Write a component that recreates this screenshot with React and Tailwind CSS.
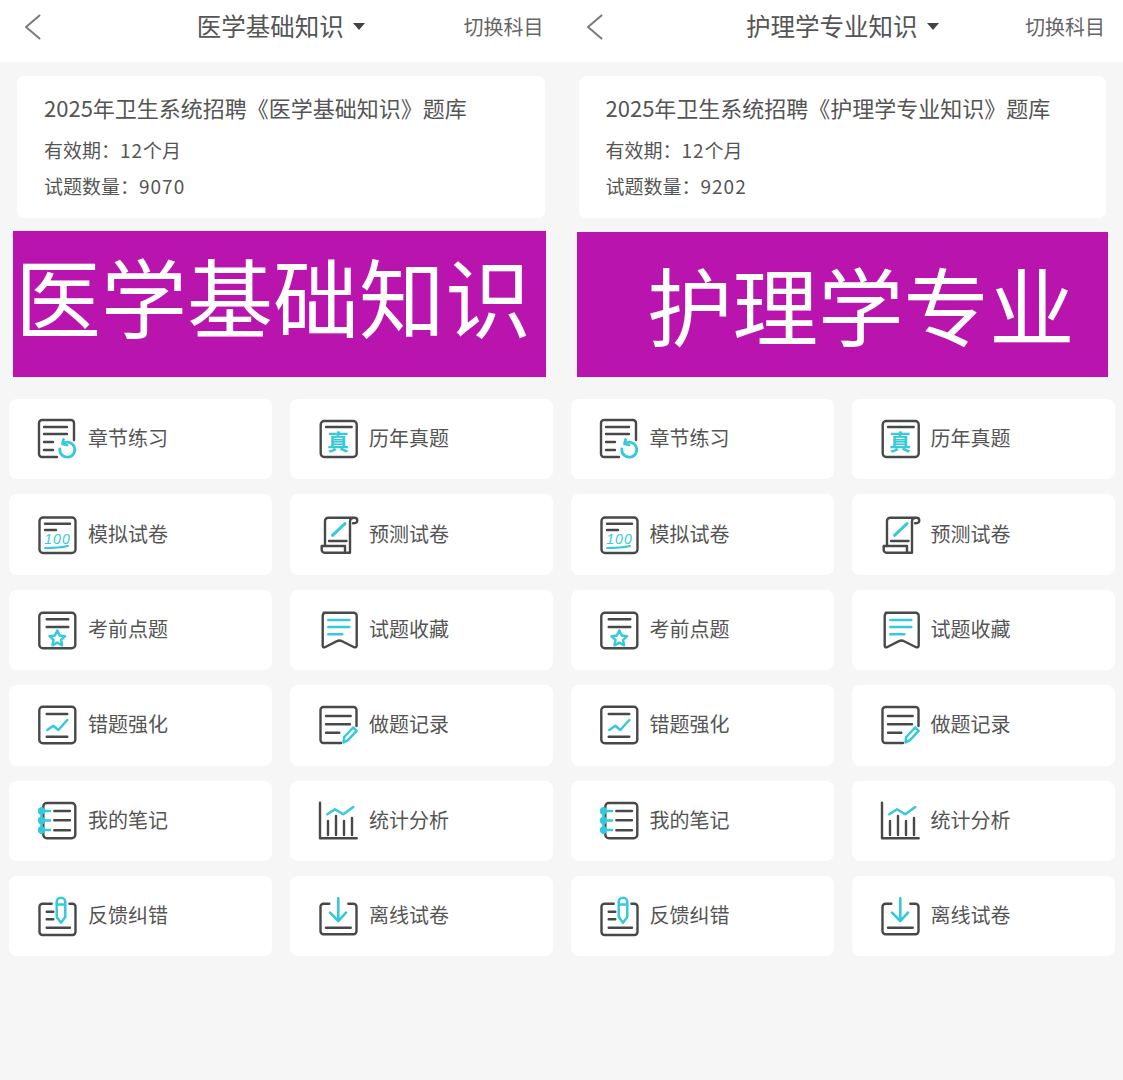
import React from 'react';

const Dark = ({ children }) => (
  <g fill="none" stroke="#484848" strokeWidth="2.4" strokeLinecap="round" strokeLinejoin="round">{children}</g>
);
const Cyan = ({ children, width = 2.5 }) => (
  <g fill="none" stroke="#35c9dc" strokeWidth={width} strokeLinecap="round" strokeLinejoin="round">{children}</g>
);

const ICONS = {
  chapter: (
    <>
      <Dark>
        <path d="M20 38H5a3 3 0 0 1-3-3V4a3 3 0 0 1 3-3h29a3 3 0 0 1 3 3v17" />
        <path d="M7 8h23M7 15h23M7 23h9M7 31h9" />
      </Dark>
      <Cyan width={2.8}>
        <path d="M26 24.5a7.5 7.5 0 1 1-3.2 5.5" />
        <path d="M26.5 20.5l-1 4.5 4.5 1" />
      </Cyan>
    </>
  ),
  exam: (
    <>
      <Dark>
        <rect x="2.5" y="2.5" width="36" height="35.5" rx="3.5" />
        <path d="M8 8.7h25M8 15h11" />
      </Dark>
      <text x="20.5" y="29" textAnchor="middle" fontSize="14" letterSpacing="1" fontStyle="italic" fontWeight="400" fill="#35c9dc" fontFamily="Liberation Sans, sans-serif">100</text>
      <Cyan width={1.8}>
        <path d="M8 33c8 0 16-.5 23-2" />
      </Cyan>
    </>
  ),
  past: (
    <>
      <Dark>
        <rect x="2.7" y="2" width="36" height="36" rx="3.5" />
        <path d="M8 8h25.7" />
      </Dark>
      <text x="20" y="31" textAnchor="middle" fontSize="22" fontWeight="700" fill="#35c9dc" fontFamily="Noto Sans CJK SC, sans-serif">真</text>
    </>
  ),
  predict: (
    <>
      <Dark>
        <path d="M7 31V6a3.3 3.3 0 0 1 3.3-3.3H36.5a2.8 2.8 0 0 1 2.8 2.8c0 1.5-1.2 2.7-4.3 2.7" />
        <path d="M35 3c-2 0-3 1.5-3 3.5V37.7H6.5A3 3 0 0 1 3.7 34.5V31H27v6" />
        <path d="M11 26h17.5" />
      </Dark>
      <Cyan width={3}>
        <path d="M14.5 20.3 27 8.7" />
      </Cyan>
    </>
  ),
  star: (
    <>
      <Dark>
        <rect x="2.3" y="2.7" width="36" height="35.6" rx="3.5" />
        <path d="M9.7 9.3h21.6M9.7 17h21.6" />
      </Dark>
      <Cyan>
        <path d="M20.3 20.5l2.4 5 5.4.7-4 3.7 1 5.4-4.8-2.7-4.8 2.7 1-5.4-4-3.7 5.4-.7z" />
      </Cyan>
    </>
  ),
  collect: (
    <>
      <Dark>
        <path d="M5.7 2.7h30a3 3 0 0 1 3 3v30c0 1.5-1.5 2-2.6 1.5l-12-6a6 6 0 0 0-5.2 0l-12 6c-1.1.5-2.2 0-2.2-1.5v-30a3 3 0 0 1 3-3z" />
      </Dark>
      <Cyan>
        <path d="M10.3 10h21M10.3 17h21M10.3 24.3h14" />
      </Cyan>
    </>
  ),
  wrong: (
    <>
      <Dark>
        <rect x="2.3" y="1.7" width="36" height="36.6" rx="3.5" />
        <path d="M9.7 9h20.6M9.7 31.7h20.6" />
      </Dark>
      <Cyan>
        <path d="M10.3 25l6-4.3 5 4.3 9-10" />
      </Cyan>
    </>
  ),
  record: (
    <>
      <Dark>
        <path d="M23 38H5.5a3 3 0 0 1-3-3V5a3 3 0 0 1 3-3h30a3 3 0 0 1 3 3v16" />
        <path d="M8 11h24.7M8 19.3h24M8 27.7h13.3" />
      </Dark>
      <Cyan>
        <path d="M25.5 37.5l.7-5.5 9-9.5 3.5 3.3-9 9.5z" />
      </Cyan>
    </>
  ),
  note: (
    <>
      <Dark>
        <rect x="6.3" y="2" width="32" height="35.3" rx="3.5" />
        <path d="M17.3 10H33M17.3 19.3H33M17.3 29.3H33" />
      </Dark>
      <Cyan width={2.6}>
        <circle cx="4.5" cy="10" r="2.4" fill="#35c9dc" />
        <circle cx="4.5" cy="19.5" r="2.4" fill="#35c9dc" />
        <circle cx="4.5" cy="29" r="2.4" fill="#35c9dc" />
        <path d="M4.5 10H13M4.5 19.5H13M4.5 29H13M4.5 7v25" />
      </Cyan>
    </>
  ),
  feedback: (
    <>
      <Dark>
        <path d="M14.7 7.7H5.5a3 3 0 0 0-3 3V36a3 3 0 0 0 3 3h30a3 3 0 0 0 3-3V10.7a3 3 0 0 0-3-3h-3" />
        <path d="M9.7 15.7h6.6M9.7 23.3h6.6M9.7 31.7H33" />
      </Dark>
      <Cyan>
        <path d="M19.7 6a4.3 4.3 0 0 1 8.6 0v15l-4.3 5.7-4.3-5.7zM19.7 8.5h8.6" />
      </Cyan>
    </>
  ),
  stats: (
    <>
      <Dark>
        <path d="M2 1.7v35.6h36.7" />
        <path d="M10 34V20M18 34V15M26 34V20M34 34V17" />
      </Dark>
      <Cyan>
        <path d="M9.3 13.3 17 8.3l8.3 5 10-7.3" />
      </Cyan>
    </>
  ),
  offline: (
    <>
      <Dark>
        <path d="M11.3 7.7H5.5a3 3 0 0 0-3 3V35.3a3 3 0 0 0 3 3h30a3 3 0 0 0 3-3V10.7a3 3 0 0 0-3-3h-5.2" />
        <path d="M8 31.7h24.7" />
      </Dark>
      <Cyan width={2.6}>
        <path d="M20.3 2.3V25M12 16.7l8.3 8.3 7.7-8.3" />
      </Cyan>
    </>
  ),
};

const MENU = [
  ['chapter', '章节练习'],
  ['past', '历年真题'],
  ['exam', '模拟试卷'],
  ['predict', '预测试卷'],
  ['star', '考前点题'],
  ['collect', '试题收藏'],
  ['wrong', '错题强化'],
  ['record', '做题记录'],
  ['note', '我的笔记'],
  ['stats', '统计分析'],
  ['feedback', '反馈纠错'],
  ['offline', '离线试卷'],
];

const Panel = ({ subject, title, count, banner, bannerClass }) => (
  <div className="w-[561.5px] shrink-0">
    <header className="h-[62px] bg-white grid grid-cols-[1fr_auto_1fr] items-center pb-[8px]">
      <div className="pl-[24px]">
        <svg width="17" height="26" viewBox="0 0 17 26" fill="none" stroke="#7a7a7a" strokeWidth="2" strokeLinecap="round" strokeLinejoin="round">
          <path d="M15.5 1.5 2 13l13.5 11.5" />
        </svg>
      </div>
      <div className="flex items-center gap-[9px] text-[24.5px] leading-none text-[#555] mb-[2px]">
        {subject}
        <span className="w-0 h-0 border-x-[6px] border-x-transparent border-t-[7px] border-t-[#444]" />
      </div>
      <div className="justify-self-end pr-[18px] text-[20px] leading-none text-[#666]">切换科目</div>
    </header>

    <section className="mt-[14px] mx-[17px] h-[142px] bg-white rounded-[7px] pl-[27px] pt-[15px] text-[#555]">
      <h2 className="text-[22px] leading-[32px] font-normal">{title}</h2>
      <p className="mt-[13px] text-[19px] leading-[28px]">
        有效期：<span className="tracking-[1px]">12</span>个月
      </p>
      <p className="mt-[8px] text-[19px] leading-[28px]">
        试题数量：<span className="tracking-[1px]">{count}</span>
      </p>
    </section>

    <div className={`bg-[#b915ae] flex items-center text-white leading-none whitespace-nowrap ${bannerClass}`}>
      {banner}
    </div>

    <div className="mt-[22px] px-[9px] grid grid-cols-[263px_263px] gap-x-[18px] gap-y-[15px]">
      {MENU.map(([icon, label]) => (
        <div key={label} className="h-[80.4px] bg-white rounded-[8px] flex items-center gap-[11px] pl-[28px] text-[20px] text-[#555]">
          <svg width="40" height="40" viewBox="0 0 40 40" className="shrink-0 overflow-visible">{ICONS[icon]}</svg>
          <span className="pb-[2px]">{label}</span>
        </div>
      ))}
    </div>
  </div>
);

export default function App() {
  return (
    <div className="w-[1123px] h-[1080px] overflow-hidden bg-[#f6f6f6] flex [font-family:'Noto_Sans_CJK_SC','Noto_Sans',sans-serif]">
      <Panel
        subject="医学基础知识"
        title="2025年卫生系统招聘《医学基础知识》题库"
        count="9070"
        banner="医学基础知识"
        bannerClass="h-[146px] mt-[13px] ml-[13px] mr-[16px] pl-[2px] pb-[18px] text-[86px]"
      />
      <Panel
        subject="护理学专业知识"
        title="2025年卫生系统招聘《护理学专业知识》题库"
        count="9202"
        banner="护理学专业"
        bannerClass="h-[145px] mt-[14px] mb-[1px] ml-[15.5px] mr-[15px] pl-[70px] pb-[2px] text-[85.5px]"
      />
    </div>
  );
}
